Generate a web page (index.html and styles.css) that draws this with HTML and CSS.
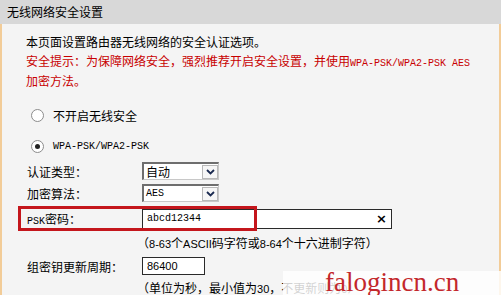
FILE: index.html
```html
<!DOCTYPE html>
<html lang="zh-CN">

<head>
    <meta charset="UTF-8">
    <title>无线网络安全设置</title>
    <link rel="stylesheet" href="styles.css">
</head>

<body>
    <div class="title">无线网络安全设置</div>
    <div class="panel">
        <p class="intro">本页面设置路由器无线网络的安全认证选项。</p>
        <p class="warn">安全提示：为保障网络安全，强烈推荐开启安全设置，并使用<span class="mono">WPA-PSK/WPA2-PSK AES</span><br>加密方法。</p>

        <div class="radioRow first"><span class="radio"></span>不开启无线安全</div>
        <div class="radioRow second"><span class="radio on"></span><span class="mono">WPA-PSK/WPA2-PSK</span></div>

        <div class="field top">
            <span class="label">认证类型：</span>
            <div class="select"><span class="value">自动</span><span class="arrow"><svg width="9" height="6" viewBox="0 0 9 6"><path d="M1 1 L4.5 4.5 L8 1" fill="none" stroke="#1a2a50" stroke-width="1.8"/></svg></span></div>
        </div>
        <div class="field">
            <span class="label">加密算法：</span>
            <div class="select"><span class="value mono">AES</span><span class="arrow"><svg width="9" height="6" viewBox="0 0 9 6"><path d="M1 1 L4.5 4.5 L8 1" fill="none" stroke="#1a2a50" stroke-width="1.8"/></svg></span></div>
        </div>
        <div class="field psk">
            <span class="label"><span class="mono">PSK</span>密码：</span>
            <div class="input wide"><span class="mono">abcd12344</span><span class="clear">×</span></div>
            <span class="mark-box"></span>
        </div>
        <p class="hint">（<span class="num">8-63</span>个<span class="num">ASCII</span>码字符或<span class="num">8-64</span>个十六进制字符）</p>
        <div class="field group">
            <span class="label">组密钥更新周期：</span>
            <div class="input short"><span class="num">86400</span></div>
        </div>
        <p class="hint">（单位为秒，最小值为<span class="num">30</span>，不更新则为<span class="num">0</span>）</p>
    </div>

    <div class="watermark">falogincn.cn</div>
</body>

</html>
```

FILE: styles.css
```css
html, body {
    margin: 0;
    height: 100%;
    overflow: hidden;
    background: #fff;
}

body {
    font-family: "Noto Sans CJK SC", sans-serif;
    font-size: 12px;
    color: #000;
    position: relative;
}

p {
    margin: 0;
}

.mono {
    font-family: "Liberation Mono", monospace;
    font-size: 10px;
}

.num {
    font-family: "Liberation Sans", sans-serif;
    font-size: 11px;
}

.title {
    width: 501px;
    height: 24px;
    line-height: 23px;
    padding-left: 7px;
    box-sizing: border-box;
    background: #d8d8d8;
}

.panel {
    width: 501px;
    height: 271px;
    box-sizing: border-box;
    background: #f4f4f4;
    border-left: 2px solid #f2cc98;
    border-right: 2px solid #f2cc98;
    padding-left: 24px;
}

.intro {
    padding-top: 9px;
    line-height: 18px;
}

.warn {
    margin-top: 1px;
    line-height: 17px;
    color: #c80000;
}

.radioRow {
    display: flex;
    align-items: center;
    height: 20px;
    margin-left: 5px;
}

.radioRow.first {
    margin-top: 16px;
}

.radioRow.second {
    margin-top: 11px;
}

.radio {
    width: 13px;
    height: 13px;
    box-sizing: border-box;
    border: 1px solid #8c8c8c;
    border-radius: 50%;
    background: #fff;
    margin-right: 9px;
    display: flex;
    align-items: center;
    justify-content: center;
}

.radio.on::after {
    content: "";
    width: 5px;
    height: 5px;
    border-radius: 50%;
    background: #222;
}

.field {
    display: flex;
    align-items: center;
    height: 22px;
    margin-left: 1px;
    position: relative;
}

.field.top {
    margin-top: 4px;
}

.label {
    width: 115px;
    flex: none;
}

.select {
    width: 77px;
    height: 18px;
    box-sizing: border-box;
    border-top: 2px solid #6e6e6e;
    border-left: 2px solid #6e6e6e;
    border-right: 1px solid #c8c8c8;
    border-bottom: 1px solid #c8c8c8;
    background: #fff;
    display: flex;
    align-items: center;
}

.select .value {
    flex: 1;
    padding-left: 2px;
    line-height: 14px;
}

.arrow {
    width: 16px;
    height: 14px;
    box-sizing: border-box;
    border: 1px solid #b8b8b8;
    background: #f6f6f6;
    display: flex;
    align-items: center;
    justify-content: center;
}

.field.psk {
    height: 25px;
    margin-top: 2px;
}

.input {
    height: 20px;
    box-sizing: border-box;
    border: 1px solid #2a2a2a;
    background: #fff;
    display: flex;
    align-items: center;
    padding-left: 4px;
}

.input.wide {
    width: 250px;
}

.input.short {
    width: 63px;
    height: 18px;
}

.clear {
    margin-left: auto;
    margin-right: 4px;
    font-family: "DejaVu Sans", sans-serif;
    font-size: 13px;
    font-weight: bold;
}

.mark-box {
    position: absolute;
    left: -9px;
    top: 0;
    width: 239px;
    height: 25px;
    box-sizing: border-box;
    border: 3px solid #c4161c;
}

.hint {
    margin-top: 3px;
    margin-left: 111px;
    line-height: 18px;
}

.field.group {
    margin-top: 2px;
}

.field.group + .hint {
    margin-top: 2px;
}

.watermark {
    position: absolute;
    left: 283px;
    top: 271px;
    width: 220px;
    height: 24px;
    padding-left: 42px;
    box-sizing: border-box;
    background: rgba(255, 255, 255, 0.82);
    font-family: "Liberation Serif", serif;
    font-size: 27px;
    line-height: 22px;
    color: #c3272b;
}
```
